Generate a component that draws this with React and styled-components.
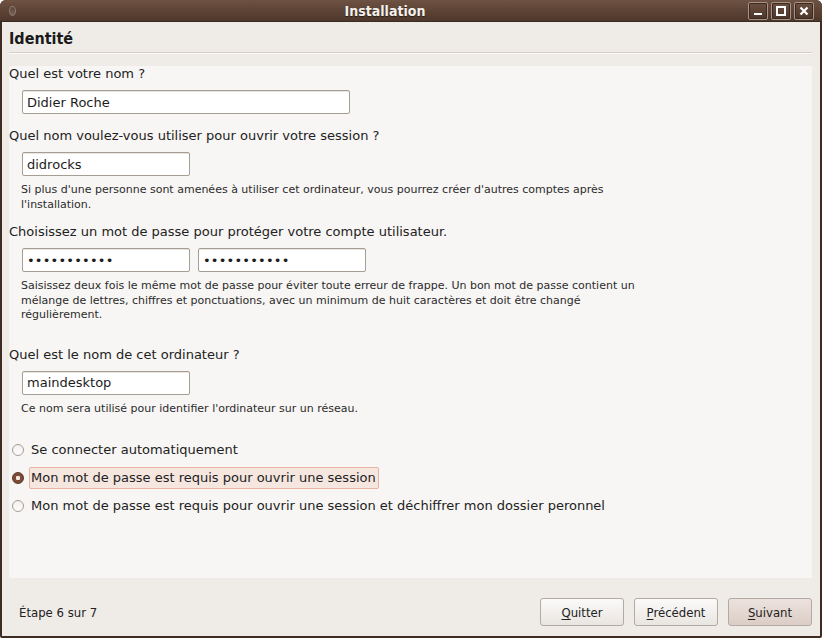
import React from 'react';
import styled, { createGlobalStyle } from 'styled-components';

const GlobalStyle = createGlobalStyle`
	html, body {
		margin: 0;
		padding: 0;
		background: #ffffff;
	}
	* {
		box-sizing: border-box;
	}
`;

const sans = `"DejaVu Sans", "Liberation Sans", sans-serif`;

const StyledWindow = styled.div`
	width: 822px;
	height: 638px;
	display: flex;
	flex-direction: column;
	background: #3d2c22;
	border-radius: 6px 6px 2px 2px;
	overflow: hidden;
	font-family: ${sans};
`;

const StyledTitleBar = styled.div`
	height: 22px;
	flex-shrink: 0;
	display: flex;
	align-items: center;
	justify-content: space-between;
	padding: 0 8px 0 9px;
	background: linear-gradient(#6e5243, #5a4133 60%, #4e382c);
	border-bottom: 1px solid #3a2a20;
`;

const StyledTitleDot = styled.span`
	width: 7px;
	height: 10px;
	border-radius: 50%;
	border: 1px solid #8d7b70;
	background: linear-gradient(#5b4337, #7a6458);
`;

const StyledTitle = styled.span`
	color: #f4f0ec;
	font-weight: bold;
	font-size: 14px;
	font-stretch: condensed;
	text-shadow: 0 1px 1px #2a1d16;
	margin-left: 6px;
`;

const StyledWinButtons = styled.div`
	display: flex;
	gap: 3px;
`;

const StyledWinButton = styled.span`
	width: 20px;
	height: 18px;
	display: flex;
	align-items: center;
	justify-content: center;
	border: 1px solid #a99384;
	border-radius: 2px;
	background: linear-gradient(#6c5042, #4b3529);
	box-shadow: inset 0 0 0 1px #3c2a20;
`;

const StyledBody = styled.div`
	flex: 1;
	display: flex;
	flex-direction: column;
	margin: 0 2px 2px 2px;
	background: #efebe7;
	padding: 7px 8px 0 7px;
`;

const StyledHeading = styled.h1`
	margin: 0;
	font-size: 16px;
	line-height: 20px;
	font-weight: bold;
	font-stretch: condensed;
	color: #1a1a1a;
	padding-bottom: 3px;
	border-bottom: 1px solid #d9cec6;
	box-shadow: 0 1px 0 #fbfaf9;
`;

const StyledPanel = styled.div`
	margin-top: 13px;
	height: 512px;
	background: #f7f6f4;
	padding-right: 12px;
	display: flex;
	flex-direction: column;
`;

const StyledLabel = styled.div`
	font-size: 13px;
	line-height: 16px;
	color: #222;
	margin-top: ${(p) => p.$top || 0}px;
`;

const StyledRow = styled.div`
	display: flex;
	gap: 8px;
	margin: 8px 0 0 13px;
`;

const StyledInput = styled.div`
	width: ${(p) => p.$width}px;
	height: 24px;
	background: #ffffff;
	border: 1px solid #a69d95;
	border-radius: 2px;
	box-shadow: inset 0 1px 0 #e8e4e0;
	padding: 0 4px;
	display: flex;
	align-items: center;
	font-size: 13px;
	color: #1c1c1c;
	letter-spacing: ${(p) => (p.$secret ? '0.2px' : '0')};
`;

const StyledHint = styled.div`
	font-size: 11px;
	line-height: 14.5px;
	color: #2b2b2b;
	margin: ${(p) => p.$top || 7}px 0 0 12px;
	max-width: 628px;
`;

const StyledRadios = styled.div`
	margin-top: 23px;
	display: flex;
	flex-direction: column;
	gap: 6px;
`;

const StyledRadioRow = styled.div`
	display: flex;
	align-items: center;
	height: 22px;
	gap: 5px;
	padding-left: 3px;
`;

const StyledRadioMark = styled.span`
	width: 12px;
	height: 12px;
	border-radius: 50%;
	flex-shrink: 0;
	border: 1px solid ${(p) => (p.$checked ? '#5c3526' : '#a49d96')};
	background: ${(p) =>
		p.$checked
			? 'radial-gradient(circle, #f3e6df 0 2px, #7d4c38 2.5px)'
			: 'linear-gradient(#f1efed, #ffffff)'};
`;

const StyledRadioText = styled.span`
	font-size: 13px;
	line-height: 16px;
	color: #222;
	padding: 2px 2px 2px 1px;
	border: 1px solid ${(p) => (p.$checked ? '#e9b5a0' : 'transparent')};
	border-radius: 2px;
	background: ${(p) => (p.$checked ? '#f5e6df' : 'transparent')};
`;

const StyledFooter = styled.div`
	flex: 1;
	display: flex;
	align-items: center;
	justify-content: space-between;
	padding: 12px 0 2px 10px;
`;

const StyledStep = styled.span`
	font-size: 13px;
	font-stretch: condensed;
	color: #222;
`;

const StyledButtons = styled.div`
	display: flex;
	gap: 10px;
`;

const StyledButton = styled.button`
	width: ${(p) => p.$width || 84}px;
	height: 28px;
	border: 1px solid #b3aaa3;
	border-radius: 3px;
	background: ${(p) =>
		p.$primary
			? 'linear-gradient(#ece2dd, #dccdc6)'
			: 'linear-gradient(#fbfaf9, #e9e5e1)'};
	font-family: ${sans};
	font-size: 13px;
	font-stretch: condensed;
	color: #222;
	padding: 0;
	u {
		text-decoration-thickness: 1px;
		text-underline-offset: 2px;
	}
`;

const MinIcon = () => (
	<svg width='10' height='10' viewBox='0 0 10 10'>
		<rect x='1' y='7' width='8' height='2' fill='#fff' />
	</svg>
);

const MaxIcon = () => (
	<svg width='10' height='10' viewBox='0 0 10 10'>
		<rect x='1' y='1' width='8' height='8' fill='none' stroke='#fff' strokeWidth='2' />
	</svg>
);

const CloseIcon = () => (
	<svg width='10' height='10' viewBox='0 0 10 10'>
		<path d='M1.5 1.5 L8.5 8.5 M8.5 1.5 L1.5 8.5' stroke='#fff' strokeWidth='2.2' />
	</svg>
);

const radios = [
	{ text: 'Se connecter automatiquement', checked: false },
	{ text: 'Mon mot de passe est requis pour ouvrir une session', checked: true },
	{
		text: 'Mon mot de passe est requis pour ouvrir une session et déchiffrer mon dossier peronnel',
		checked: false,
	},
];

const App = () => {
	return (
		<>
			<GlobalStyle />
			<StyledWindow>
				<StyledTitleBar>
					<StyledTitleDot />
					<StyledTitle>Installation</StyledTitle>
					<StyledWinButtons>
						<StyledWinButton>
							<MinIcon />
						</StyledWinButton>
						<StyledWinButton>
							<MaxIcon />
						</StyledWinButton>
						<StyledWinButton>
							<CloseIcon />
						</StyledWinButton>
					</StyledWinButtons>
				</StyledTitleBar>
				<StyledBody>
					<StyledHeading>Identité</StyledHeading>
					<StyledPanel>
						<StyledLabel>Quel est votre nom ?</StyledLabel>
						<StyledRow>
							<StyledInput $width={328}>Didier Roche</StyledInput>
						</StyledRow>
						<StyledLabel $top={14}>
							Quel nom voulez-vous utiliser pour ouvrir votre session ?
						</StyledLabel>
						<StyledRow>
							<StyledInput $width={168}>didrocks</StyledInput>
						</StyledRow>
						<StyledHint>
							Si plus d'une personne sont amenées à utiliser cet ordinateur, vous
							pourrez créer d'autres comptes après l'installation.
						</StyledHint>
						<StyledLabel $top={12}>
							Choisissez un mot de passe pour protéger votre compte utilisateur.
						</StyledLabel>
						<StyledRow>
							<StyledInput $width={168} $secret>
								•••••••••••
							</StyledInput>
							<StyledInput $width={168} $secret>
								•••••••••••
							</StyledInput>
						</StyledRow>
						<StyledHint>
							Saisissez deux fois le même mot de passe pour éviter toute erreur de
							frappe. Un bon mot de passe contient un mélange de lettres, chiffres
							et ponctuations, avec un minimum de huit caractères et doit être
							changé régulièrement.
						</StyledHint>
						<StyledLabel $top={24}>Quel est le nom de cet ordinateur ?</StyledLabel>
						<StyledRow>
							<StyledInput $width={168}>maindesktop</StyledInput>
						</StyledRow>
						<StyledHint>
							Ce nom sera utilisé pour identifier l'ordinateur sur un réseau.
						</StyledHint>
						<StyledRadios>
							{radios.map((r) => (
								<StyledRadioRow key={r.text}>
									<StyledRadioMark $checked={r.checked} />
									<StyledRadioText $checked={r.checked}>{r.text}</StyledRadioText>
								</StyledRadioRow>
							))}
						</StyledRadios>
					</StyledPanel>
					<StyledFooter>
						<StyledStep>Étape 6 sur 7</StyledStep>
						<StyledButtons>
							<StyledButton>
								<u>Q</u>uitter
							</StyledButton>
							<StyledButton>
								<u>P</u>récédent
							</StyledButton>
							<StyledButton $primary>
								<u>S</u>uivant
							</StyledButton>
						</StyledButtons>
					</StyledFooter>
				</StyledBody>
			</StyledWindow>
		</>
	);
};

export default App;
